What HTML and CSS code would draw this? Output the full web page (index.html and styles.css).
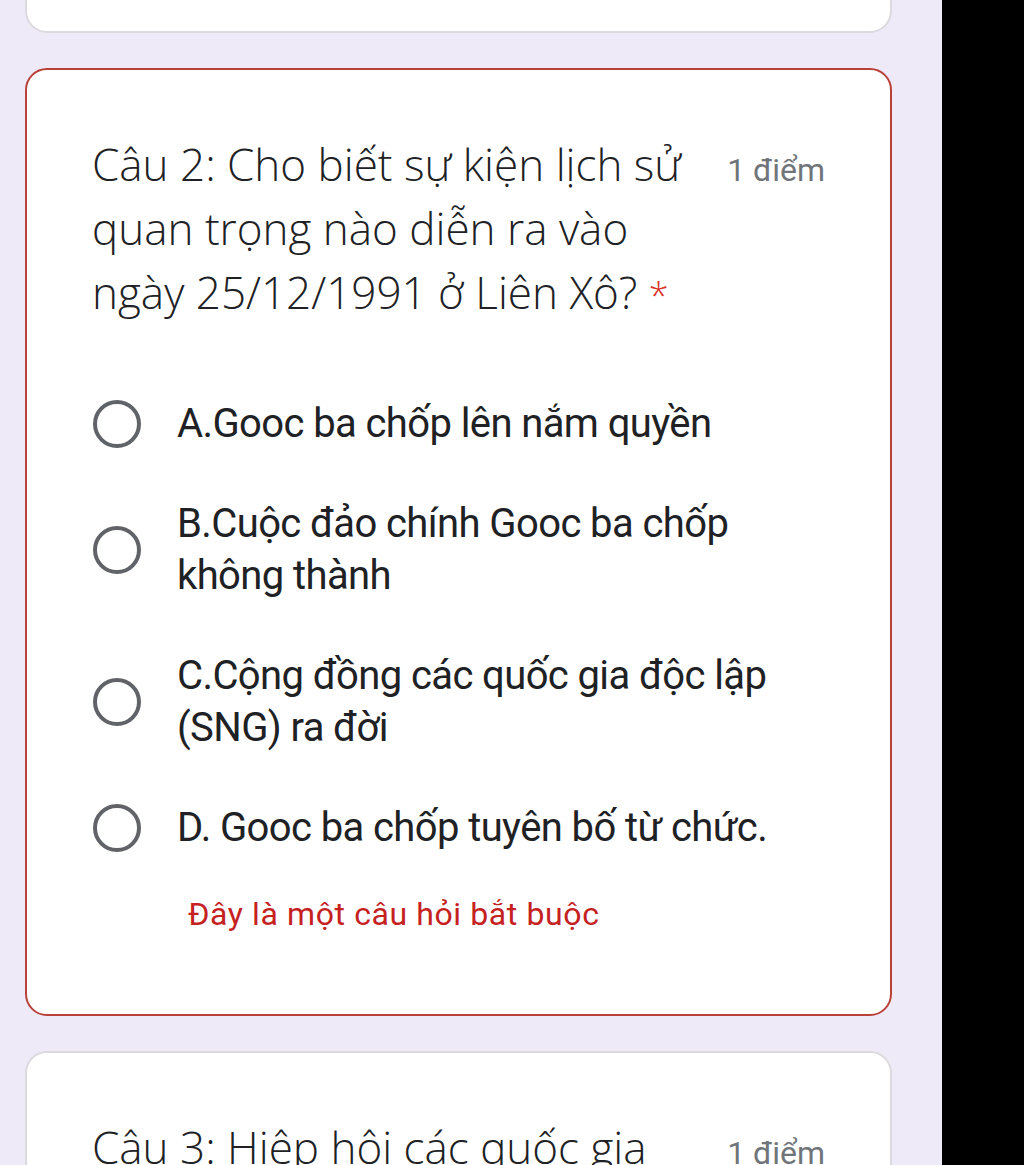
FILE: index.html
```html
<!DOCTYPE html>
<html lang="vi">

<head>
    <meta charset="UTF-8">
    <meta name="viewport" content="width=device-width, initial-scale=1.0">
    <title>Câu hỏi</title>
    <link rel="stylesheet" href="styles.css">
</head>

<body>
    <div class="page">
        <div class="card card-prev"></div>

        <div class="card card-error">
            <div class="question-head">
                <h2 class="question-title">Câu 2: Cho biết sự kiện lịch sử quan trọng nào diễn ra vào ngày 25/12/1991 ở Liên Xô? <span class="required">*</span></h2>
                <span class="points">1 điểm</span>
            </div>

            <div class="options">
                <label class="option">
                    <span class="radio"></span>
                    <span class="option-text">A.Gooc ba chốp lên nắm quyền</span>
                </label>
                <label class="option">
                    <span class="radio"></span>
                    <span class="option-text">B.Cuộc đảo chính Gooc ba chốp không thành</span>
                </label>
                <label class="option">
                    <span class="radio"></span>
                    <span class="option-text">C.Cộng đồng các quốc gia độc lập (SNG) ra đời</span>
                </label>
                <label class="option">
                    <span class="radio"></span>
                    <span class="option-text">D. Gooc ba chốp tuyên bố từ chức.</span>
                </label>
            </div>

            <p class="error-msg">Đây là một câu hỏi bắt buộc</p>
        </div>

        <div class="card card-next">
            <div class="question-head">
                <h2 class="question-title">Câu 3: Hiệp hội các quốc gia Đông Nam Á (ASEAN) được thành lập vào năm nào?</h2>
                <span class="points">1 điểm</span>
            </div>
        </div>
    </div>
    <div class="edge"></div>
</body>

</html>
```

FILE: styles.css
```css
body {
    margin: 0;
    height: 1165px;
    overflow: hidden;
    display: flex;
    background-color: #000;
    font-family: Roboto, "Noto Sans", sans-serif;
}

.page {
    width: 942px;
    flex-shrink: 0;
    background-color: #efeaf8;
    padding: 0 50px 0 25px;
    box-sizing: border-box;
    display: flex;
    flex-direction: column;
    gap: 35px;
}

.edge {
    flex: 1;
    background-color: #000;
}

.card {
    background: white;
    border: 2px solid #dcdade;
    border-radius: 22px;
    padding: 0 65px;
    flex-shrink: 0;
}

.card-prev {
    height: 31px;
    border-top: none;
    border-radius: 0 0 22px 22px;
}

.card-error {
    border-color: #b8413a;
    padding-top: 62px;
    padding-bottom: 80px;
}

.card-next {
    padding-top: 62px;
}

.question-head {
    display: flex;
    justify-content: space-between;
    align-items: flex-start;
}

.question-title {
    margin: 0;
    width: 605px;
    font-family: "Open Sans", Roboto, sans-serif;
    font-weight: 300;
    font-size: 44px;
    line-height: 64px;
    letter-spacing: 0;
    color: #202124;
}

.required {
    font-size: 36px;
    line-height: 1;
    color: #d93025;
}

.points {
    margin-top: 6px;
    font-size: 32px;
    line-height: 64px;
    color: #70757a;
}

.options {
    margin-top: 74px;
    display: flex;
    flex-direction: column;
    gap: 48px;
}

.option {
    display: flex;
    align-items: center;
    gap: 36px;
    padding-left: 1px;
}

.radio {
    width: 40px;
    height: 40px;
    border: 4px solid #606368;
    border-radius: 50%;
    flex-shrink: 0;
}

.option-text {
    font-size: 40px;
    line-height: 52px;
    letter-spacing: -0.6px;
    color: #202124;
    max-width: 600px;
}

.error-msg {
    margin: 40px 0 0 96px;
    font-size: 32px;
    line-height: 40px;
    letter-spacing: 0.6px;
    color: #c5221f;
}
```
